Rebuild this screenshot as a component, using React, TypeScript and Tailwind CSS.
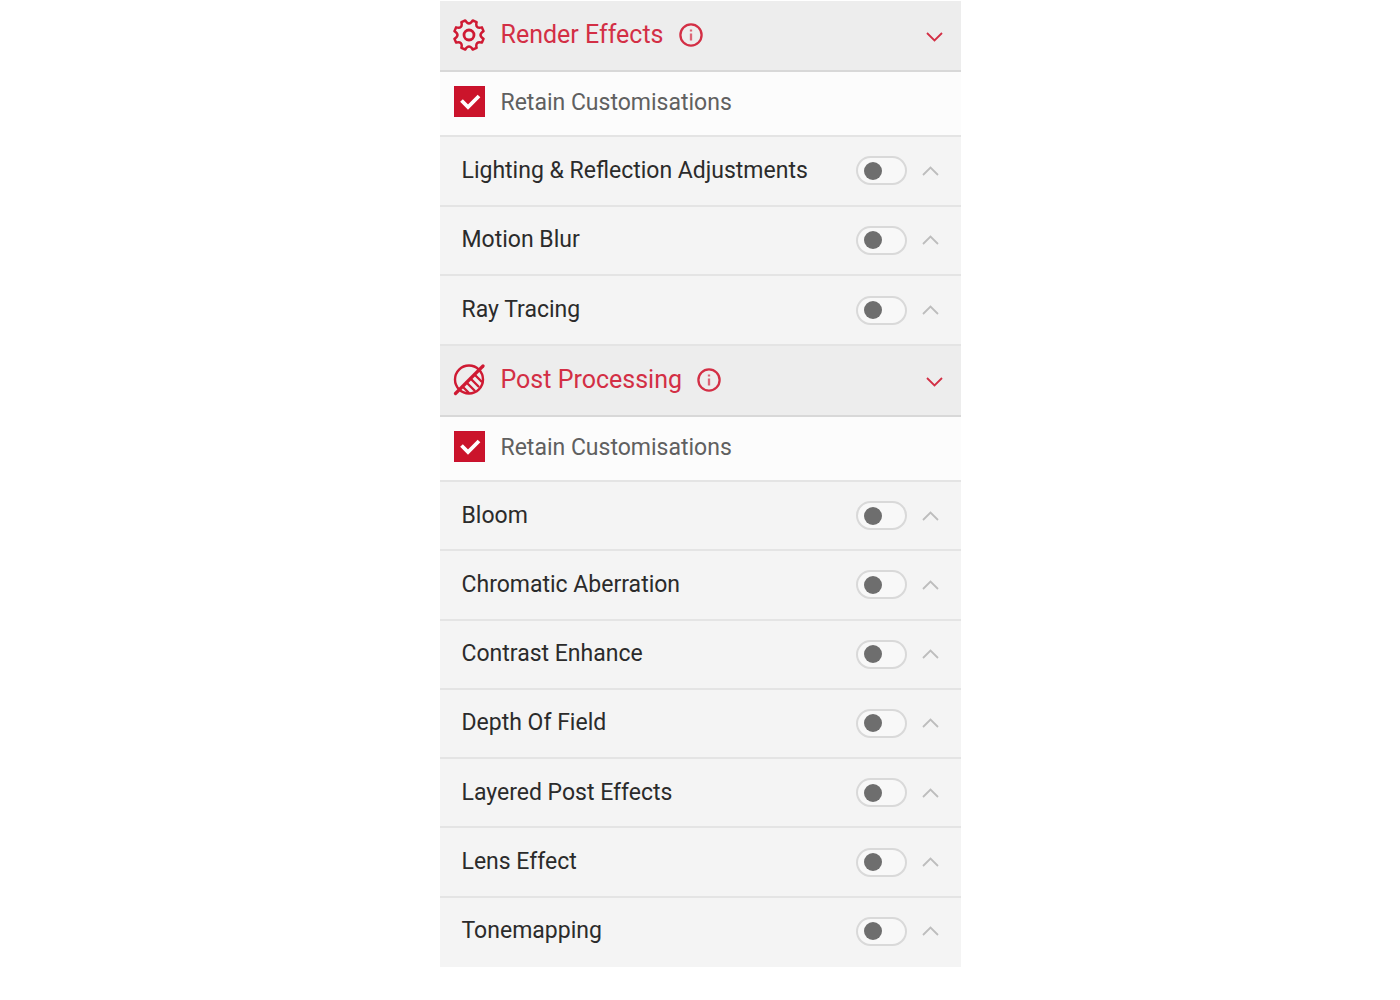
import { useId, useState, type ReactNode } from 'react';

const polar = (radius: number, degrees: number) => {
  const a = ((degrees - 90) * Math.PI) / 180;
  return `${(16 + radius * Math.cos(a)).toFixed(2)} ${(16 + radius * Math.sin(a)).toFixed(2)}`;
};

const gearOutline =
  Array.from({ length: 8 }, (_, i) => {
    const tooth = 22.5 + i * 45;
    return `${i === 0 ? 'M' : 'L'}${polar(15, tooth - 8)} L${polar(15, tooth + 8)} C${polar(10.6, tooth + 15)} ${polar(10.6, tooth + 30)} ${polar(15, tooth + 37)}`;
  }).join(' ') + ' Z';

function GearIcon() {
  return (
    <svg viewBox="0 0 32 32" className="size-8 shrink-0" fill="none" stroke="#cf1a33" strokeWidth="2.5" strokeLinejoin="round" aria-hidden="true">
      <path d={gearOutline} />
      <circle cx="16" cy="16" r="5" strokeWidth="2.8" />
    </svg>
  );
}

function ContrastIcon() {
  return (
    <svg viewBox="0 0 32 32" className="size-8 shrink-0" fill="none" stroke="#cf1a33" strokeWidth="2.4" strokeLinecap="round" aria-hidden="true">
      <circle cx="16" cy="15.5" r="14" />
      <path d="M2.5 29.5 30 2" strokeWidth="3.2" />
      <path d="M21.5 10.5l7 7M17.5 14.5l8 8M13.5 18.5l8 8M9.5 22.5l6 6" />
    </svg>
  );
}

function Chevron({ up = false }: { up?: boolean }) {
  return (
    <svg viewBox="0 0 18 12" className="h-3 w-[18px]" fill="none" stroke="currentColor" strokeWidth="1.8" aria-hidden="true">
      <path d={up ? 'M2 10 9.5 2.5 17 10' : 'M2 2 9.5 9.5 17 2'} />
    </svg>
  );
}

function SectionHeader({ icon, title }: { icon: ReactNode; title: string }) {
  return (
    <header className="flex h-[71px] items-center border-b-2 border-[#d8d8d8] bg-[#ededed] pr-[18px] pb-0.5 pl-[13px] text-[#d32f45]">
      {icon}
      <h2 className="ml-4 text-[25px] leading-8">{title}</h2>
      <button type="button" aria-label={`About ${title}`} className="ml-[15px]">
        <svg viewBox="0 0 24 24" className="size-6" fill="none" stroke="#d32f45" strokeWidth="2.3" aria-hidden="true">
          <circle cx="12" cy="12" r="10.6" />
          <path d="M12 10.5v7M12 6.5v2" stroke="#dc6475" />
        </svg>
      </button>
      <button type="button" aria-label={`Collapse ${title}`} className="mt-1 ml-auto">
        <Chevron />
      </button>
    </header>
  );
}

function RetainRow() {
  const id = useId();
  const [checked, setChecked] = useState(true);
  return (
    <div className="flex h-[65px] items-center border-b-2 border-[#e4e4e4] bg-[#fcfcfc] pb-0.5 pl-3.5">
      <span className="relative mb-0.5 size-[31px]">
        <input
          id={id}
          type="checkbox"
          checked={checked}
          onChange={(e) => setChecked(e.target.checked)}
          className="peer block size-full appearance-none border border-[#c8102e] checked:bg-[#cb142b]"
        />
        <svg viewBox="0 0 31 31" className="pointer-events-none absolute inset-0 hidden size-full peer-checked:block" fill="none" stroke="#fff" strokeWidth="3.8" aria-hidden="true">
          <path d="M7.5 14.5 14 21 25 10" />
        </svg>
      </span>
      <label htmlFor={id} className="ml-4 text-[23px] leading-8 text-[#606060]">Retain Customisations</label>
    </div>
  );
}

function EffectRow({ name }: { name: string }) {
  const id = useId();
  const [on, setOn] = useState(false);
  return (
    <li className="flex items-center border-b-2 border-[#e4e4e4] px-[22px]">
      <label htmlFor={id} className="text-[23px] leading-8 text-[#2b2b2b]">{name}</label>
      <input
        id={id}
        type="checkbox"
        role="switch"
        checked={on}
        onChange={(e) => setOn(e.target.checked)}
        className="ml-auto flex h-[29px] w-[51px] appearance-none items-center rounded-full border-2 border-[#d9d9d9] bg-[#f8f8f8] px-1.5 before:size-[18px] before:rounded-full before:bg-[#6e6e6e] checked:justify-end checked:before:bg-[#cb142b]"
      />
      <button type="button" aria-label={`Expand ${name}`} className="ml-3.5 text-[#bdbdbd]">
        <Chevron up />
      </button>
    </li>
  );
}

const renderEffects = ['Lighting & Reflection Adjustments', 'Motion Blur', 'Ray Tracing'];
const postEffects = ['Bloom', 'Chromatic Aberration', 'Contrast Enhance', 'Depth Of Field', 'Layered Post Effects', 'Lens Effect', 'Tonemapping'];

export default function App() {
  return (
    <main className="min-h-screen bg-white pt-px font-['Roboto',sans-serif]">
      <div className="mx-auto w-full max-w-[521px] bg-[#f4f4f4]">
        <section>
          <SectionHeader icon={<GearIcon />} title="Render Effects" />
          <RetainRow />
          <ul className="grid min-h-[209px] auto-rows-fr">
            {renderEffects.map((name) => <EffectRow key={name} name={name} />)}
          </ul>
        </section>
        <section>
          <SectionHeader icon={<ContrastIcon />} title="Post Processing" />
          <RetainRow />
          <ul className="grid min-h-[485px] auto-rows-fr [&>li:last-child]:border-transparent">
            {postEffects.map((name) => <EffectRow key={name} name={name} />)}
          </ul>
        </section>
      </div>
    </main>
  );
}
